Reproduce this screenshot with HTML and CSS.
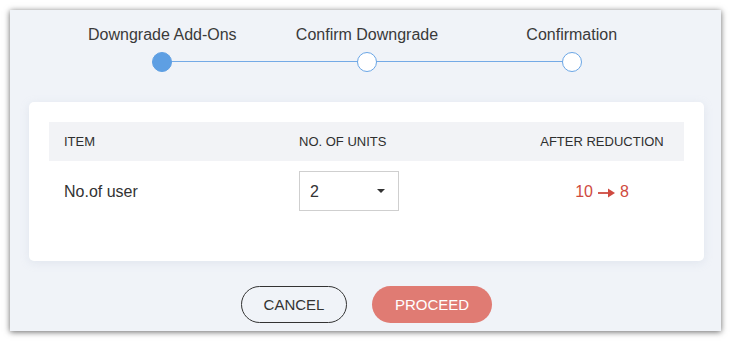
FILE: index.html
```html
<!DOCTYPE html>
<html>
<head>
<meta charset="utf-8">
<link rel="stylesheet" href="styles.css">
</head>
<body>
<div class="dialog">
  <div class="steps">
    <div class="step done">
      <div class="step-label">Downgrade Add-Ons</div>
      <div class="dot"></div>
    </div>
    <div class="step">
      <div class="step-label">Confirm Downgrade</div>
      <div class="dot"></div>
    </div>
    <div class="step last">
      <div class="step-label">Confirmation</div>
      <div class="dot"></div>
    </div>
  </div>

  <div class="card">
    <div class="table-head">
      <div class="col-item">ITEM</div>
      <div class="col-units">NO. OF UNITS</div>
      <div class="col-after">AFTER REDUCTION</div>
    </div>
    <div class="table-row">
      <div class="col-item row-label">No.of user</div>
      <div class="col-units">
        <div class="select">
          <span>2</span>
          <span class="caret"></span>
        </div>
      </div>
      <div class="col-after reduction">
        <span>10</span>
        <svg class="arrow" width="17" height="10" viewBox="0 0 17 10"><path d="M0 4.1h11v1.8H0z" fill="#cf4a40"/><path d="M10 0.6L17 5 10 9.4z" fill="#cf4a40"/></svg>
        <span>8</span>
      </div>
    </div>
  </div>

  <div class="actions">
    <button class="btn btn-cancel">CANCEL</button>
    <button class="btn btn-proceed">PROCEED</button>
  </div>
</div>
</body>
</html>
```

FILE: styles.css
```css
* { box-sizing: border-box; }
html, body { margin: 0; padding: 0; background: #ffffff; }
body {
  font-family: "Liberation Sans", Arial, sans-serif;
  color: #333;
  padding: 10px;
}
.dialog {
  width: 711px;
  height: 321px;
  background: #f0f3f8;
  box-shadow: 0 1px 6px rgba(0, 0, 0, 0.6);
  padding-top: 15px;
}
.steps {
  display: flex;
  margin-left: 50px;
  width: 614px;
}
.step {
  position: relative;
  flex: 1 1 0;
  display: flex;
  flex-direction: column;
  align-items: center;
}
.step-label {
  font-size: 16px;
  line-height: 20px;
  color: #3a3a3a;
  white-space: nowrap;
}
.dot {
  margin-top: 7px;
  width: 20px;
  height: 20px;
  border-radius: 50%;
  background: #fff;
  border: 1.5px solid #6aa6e6;
  position: relative;
  z-index: 1;
}
.step.done .dot {
  background: #5e9fe3;
  border-color: #5e9fe3;
}
.step::after {
  content: "";
  position: absolute;
  left: 50%;
  width: 100%;
  top: 36px;
  height: 1px;
  background: #74aae6;
}
.step.last::after { display: none; }

.card {
  margin: 30px 0 0 19px;
  width: 675px;
  height: 159px;
  background: #fff;
  border-radius: 5px;
  padding: 20px;
  box-shadow: 0 2px 8px rgba(180, 190, 210, 0.25);
}
.table-head, .table-row {
  display: grid;
  grid-template-columns: 235px 234px 1fr;
}
.table-head {
  height: 39px;
  background: #f2f3f6;
  align-items: center;
  font-size: 13px;
  color: #2f2f2f;
}
.col-item { padding-left: 15px; }
.col-units { padding-left: 15px; }
.col-after { text-align: center; padding-left: 2px; }
.table-row {
  padding-top: 10px;
  align-items: center;
  height: 50px;
}
.row-label { font-size: 16px; color: #333; padding-top: 2px; }
.select {
  width: 100px;
  height: 40px;
  border: 1px solid #cfcfcf;
  display: flex;
  align-items: center;
  justify-content: space-between;
  padding: 2px 13px 0 10px;
  font-size: 16px;
  color: #333;
}
.caret {
  width: 0;
  height: 0;
  border-left: 4px solid transparent;
  border-right: 4px solid transparent;
  border-top: 4px solid #333;
  margin-top: -2px;
}
.reduction {
  display: flex;
  justify-content: center;
  align-items: center;
  gap: 5px;
  font-size: 16px;
  color: #cf4a40;
  padding-top: 2px;
}
.arrow { display: block; margin-top: 1px; }

.actions {
  display: flex;
  justify-content: center;
  gap: 25px;
  margin-top: 25px;
  padding-left: 2px;
}
.btn {
  height: 37px;
  border-radius: 19px;
  font-family: "Liberation Sans", Arial, sans-serif;
  font-size: 15px;
  padding: 0;
  cursor: pointer;
}
.btn-cancel {
  width: 106px;
  background: transparent;
  border: 1px solid #333;
  color: #333;
}
.btn-proceed {
  width: 120px;
  background: #e07b73;
  border: none;
  color: #fff;
}
```
